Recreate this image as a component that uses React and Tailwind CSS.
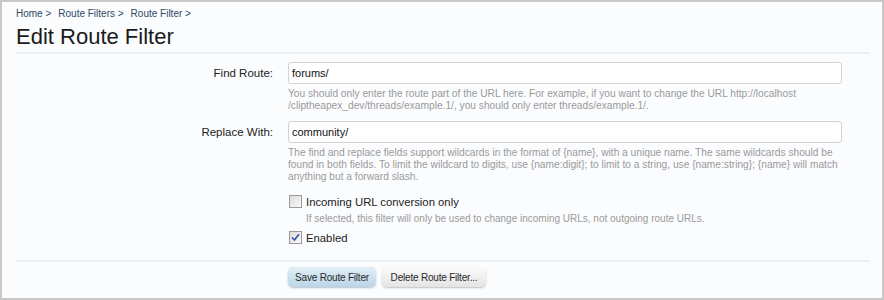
import React from 'react';

const Checkbox = ({ checked }) => (
  <span className="mt-[1px] flex h-[13px] w-[13px] shrink-0 items-center justify-center border border-[#9a9a9a] bg-gradient-to-br from-[#dcdcdc] to-[#fafafa]">
    {checked && (
      <svg width="9" height="9" viewBox="0 0 9 9">
        <path d="M1 4.5 L3.4 7 L8 1.2" fill="none" stroke="#3a4fa8" strokeWidth="1.6" />
      </svg>
    )}
  </span>
);

const Row = ({ label, value, children }) => (
  <div className="flex">
    <div className="w-[257px] shrink-0 text-right text-[11.5px] leading-[22px] text-[#222]">{label}</div>
    <div className="ml-[15px] w-[554px]">
      <div className="h-[22px] rounded-[3px] border border-[#d3d3d3] bg-white px-[3px] text-[11px] leading-[20px] text-[#111]">
        {value}
      </div>
      <p className="mt-[4px] text-[10.2px] leading-[12px] text-[#9a9a9a]">{children}</p>
    </div>
  </div>
);

export default function App() {
  return (
    <div className="h-[300px] w-[884px] border-2 border-[#c8c8c8] bg-[#fbfcfe] pl-[14px] pr-[10px] font-['Liberation_Sans',sans-serif]">
      {/* breadcrumb */}
      <div className="flex gap-[7px] pt-[5px] text-[10px] leading-[14px] text-[#2d4a62]">
        <span>Home &gt;</span>
        <span>Route Filters &gt;</span>
        <span>Route Filter &gt;</span>
      </div>
      <h1 className="mt-[4px] text-[22px] leading-[24px] text-[#1a1a1a]">Edit Route Filter</h1>
      <div className="mt-[3px] h-[2px] w-[854px] bg-[#e8eff8]" />

      <div className="mt-[8px] flex flex-col gap-[9px]">
        <Row label="Find Route:" value="forums/">
          You should only enter the route part of the URL here. For example, if you want to change the URL http://localhost
          <br />
          /cliptheapex_dev/threads/example.1/, you should only enter threads/example.1/.
        </Row>
        <Row label="Replace With:" value="community/">
          The find and replace fields support wildcards in the format of {'{name}'}, with a unique name. The same wildcards should be
          <br />
          found in both fields. To limit the wildcard to digits, use {'{name:digit}'}; to limit to a string, use {'{name:string}'}; {'{name}'} will match
          <br />
          anything but a forward slash.
        </Row>
      </div>

      <div className="ml-[273px] mt-[11px]">
        <label className="flex items-start gap-[4px] text-[11.3px] leading-[16px] text-[#222]">
          <Checkbox />
          Incoming URL conversion only
        </label>
        <p className="pl-[17px] pt-[3px] text-[10px] leading-[12px] text-[#9a9a9a]">
          If selected, this filter will only be used to change incoming URLs, not outgoing route URLs.
        </p>
        <label className="mt-[5px] flex items-start gap-[4px] text-[11.3px] leading-[16px] text-[#222]">
          <Checkbox checked />
          Enabled
        </label>
      </div>

      <div className="mt-[14px] h-[2px] w-[854px] bg-[#e8eff8]" />

      <div className="ml-[272px] mt-[5px] flex gap-[6px]">
        <button className="h-[20px] w-[88px] rounded-[5px] bg-gradient-to-b from-[#e2eef6] to-[#b9d5e8] text-[10px] tracking-[-0.2px] text-[#2a2a2a] shadow-[0_1px_2px_rgba(0,0,0,0.25)]">
          Save Route Filter
        </button>
        <button className="h-[20px] w-[104px] rounded-[5px] bg-gradient-to-b from-[#fbfbfb] to-[#e4e4e4] text-[10px] tracking-[-0.2px] text-[#2a2a2a] shadow-[0_1px_2px_rgba(0,0,0,0.25)]">
          Delete Route Filter...
        </button>
      </div>
    </div>
  );
}
